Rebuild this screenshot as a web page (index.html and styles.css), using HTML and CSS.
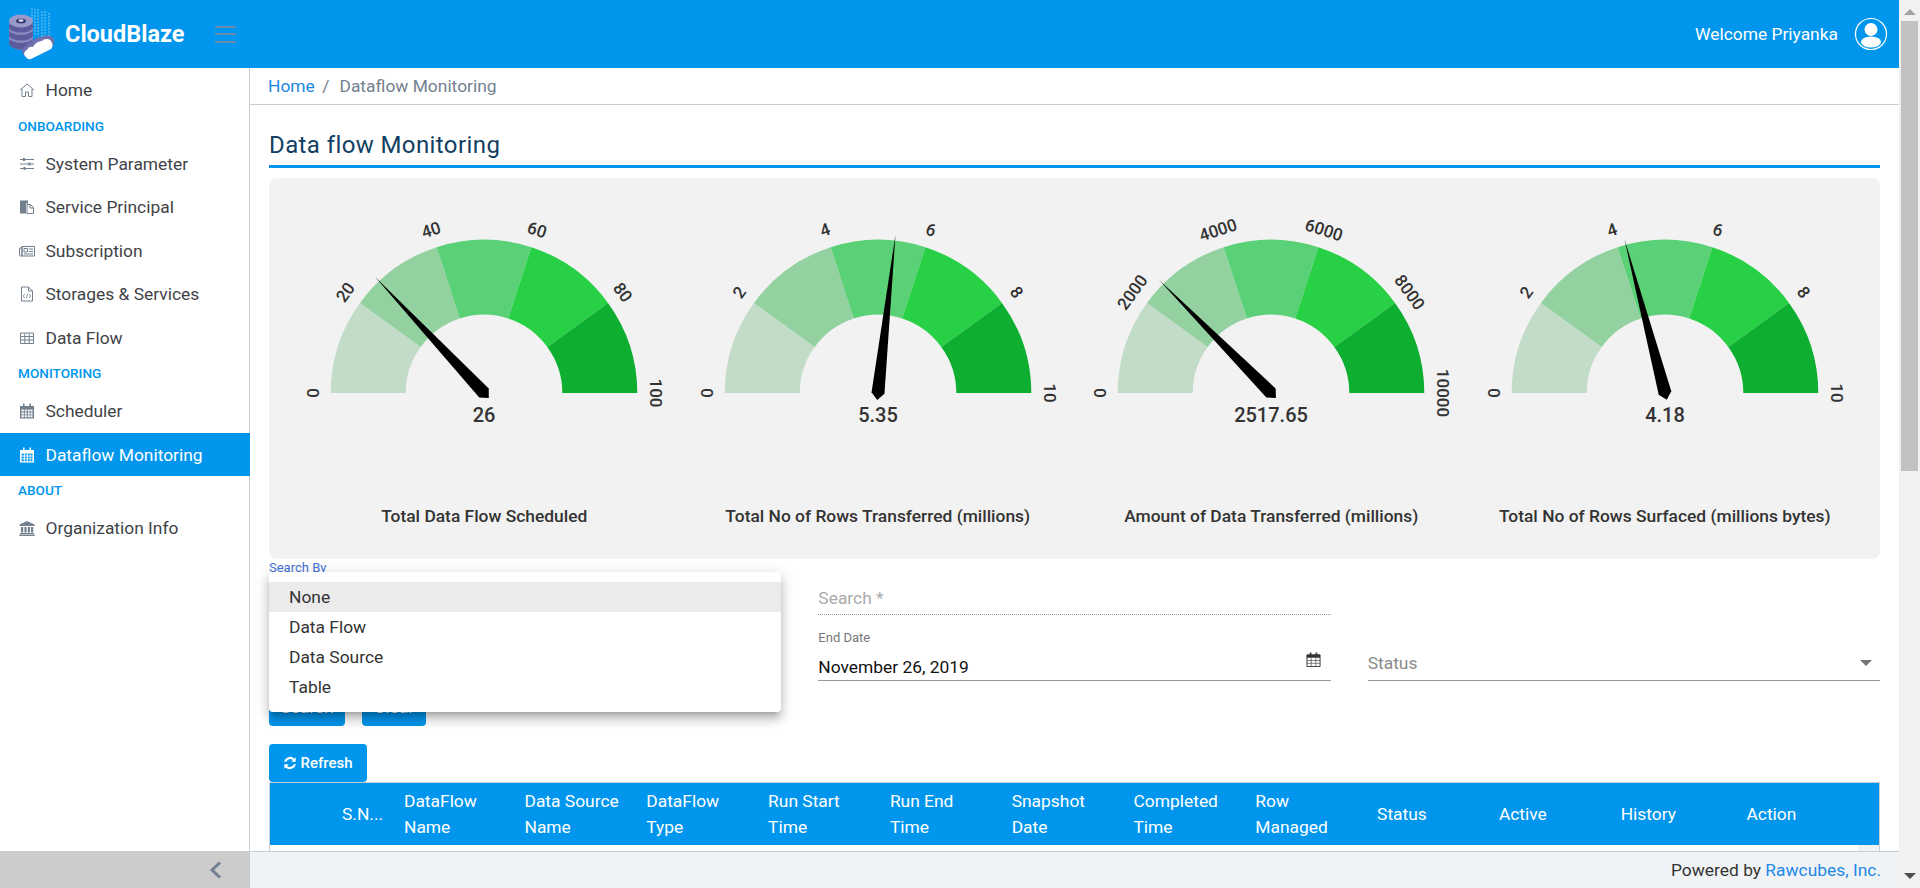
FILE: index.html
```html
<!DOCTYPE html>
<html lang="en">
<head>
<meta charset="utf-8">
<title>CloudBlaze - Dataflow Monitoring</title>
<link rel="stylesheet" href="styles.css">
</head>
<body>
<div class="page">
  <div class="app">
    <header class="topbar">
      <svg class="logo" width="56" height="60" viewBox="0 0 56 60">
        <g stroke="#7cc6f5" stroke-width="1" stroke-dasharray="2 1" fill="none">
          <path d="M26 4v26M29 5v26M32 5v26M36 7v26M39 7v26M43 9v24"/>
        </g>
        <path d="M3 38c0 4 5 8 12 8s12-4 12-8V18H3z" fill="#6f6fae"/>
        <ellipse cx="15" cy="39" rx="12" ry="6" fill="#5c5c9c"/>
        <ellipse cx="15" cy="33" rx="12" ry="6" fill="#8a8ac2"/>
        <ellipse cx="15" cy="31" rx="12" ry="5.5" fill="#5c5c9c"/>
        <ellipse cx="15" cy="25" rx="12" ry="6" fill="#8a8ac2"/>
        <ellipse cx="15" cy="23" rx="12" ry="5.5" fill="#5c5c9c"/>
        <ellipse cx="15" cy="17" rx="12" ry="6.5" fill="#9a9acb"/>
        <ellipse cx="15" cy="17" rx="5" ry="2.5" fill="#3c3c74"/>
        <ellipse cx="15" cy="16.500" rx="2.500" ry="1.200" fill="#d5e6f7"/>
        <path d="M17 50c-2-3 0-7 3-8 1-3 4-4 6-4 2-3 7-6 10-5 3-2 9-2 11 1 2 3 1 7-1 9L25 53c-3 1-6 0-8-3z" fill="#6f6fae"/>
        <path d="M20 53c-3-2-2-6 1-7 1-3 4-4 6-3 2-4 6-6 9-6 1-2 7-3 9 0 2 3 2 6 0 8L25 55c-2 .5-4 0-5-2z" fill="#fff"/>
      </svg>
      <span class="brand">CloudBlaze</span>
      <span class="burger"><i></i><i></i><i></i></span>
      <div class="user">
        <span>Welcome Priyanka</span>
        <svg width="34" height="34" viewBox="0 0 34 34">
          <defs><clipPath id="avatar"><circle cx="17" cy="17" r="15.500"/></clipPath></defs>
          <circle cx="17" cy="17" r="15.500" fill="none" stroke="#fff" stroke-width="1.200"/>
          <g clip-path="url(#avatar)" fill="#fff">
            <circle cx="17" cy="12.500" r="6.500"/>
            <ellipse cx="17" cy="25" rx="10" ry="5.500"/>
          </g>
        </svg>
      </div>
    </header>

    <div class="body">
      <aside class="sidebar">
        <nav class="nav">
          <a class="item">
            <svg class="ico" viewBox="0 0 16 16"><path d="M1 8l7-6 7 6M3 7v7.500h3.500V10h3v4.500H13V7" fill="none" stroke="currentColor"/></svg>Home</a>
          <div class="group">ONBOARDING</div>
          <a class="item">
            <svg class="ico" viewBox="0 0 16 16"><path d="M1 3.500h14M1 8h14M1 12.500h14" stroke="currentColor" fill="none"/><path d="M4 2h2v3H4zM9.500 6.500h2v3h-2zM4.500 11h2v3h-2z" fill="currentColor"/></svg>System Parameter</a>
          <a class="item">
            <svg class="ico" viewBox="0 0 16 16"><path d="M1 1.500h8v3H7v10H1z" fill="currentColor"/><path d="M8 5.500h3.500l3 3v6H8z" fill="#fff" stroke="currentColor"/><path d="M11 5.500v3.500h3.500" fill="none" stroke="currentColor"/></svg>Service Principal</a>
          <a class="item">
            <svg class="ico" viewBox="0 0 16 16"><path d="M3 3.500h12.500v9.500H1.500A1 1 0 0 1 .5 12V5H3z" fill="none" stroke="currentColor"/><path d="M3 3.500V13" stroke="currentColor" fill="none" stroke-width="1.500"/><path d="M5 5.500h3.500v3.500H5zM10 6h4M10 8.500h4M5 11h9" fill="none" stroke="currentColor"/></svg>Subscription</a>
          <a class="item">
            <svg class="ico" viewBox="0 0 16 16"><path d="M2.500 1h7l4 4v10h-11z" fill="none" stroke="currentColor"/><path d="M9.500 1v4h4" fill="none" stroke="currentColor"/><path d="M6 8l-2 2 2 2M10 8l2 2-2 2M8.700 7.500l-1.400 5" fill="none" stroke="currentColor" stroke-width=".8"/></svg>Storages &amp; Services</a>
          <a class="item">
            <svg class="ico" viewBox="0 0 16 16"><path d="M1.500 3h13v10.500h-13zM1.500 6.500h13M1.500 10h13M5.800 3.500v10M10.200 3.500v10" fill="none" stroke="currentColor"/></svg>Data Flow</a>
          <div class="group">MONITORING</div>
          <a class="item">
            <svg class="ico" viewBox="0 0 16 16"><use href="#calendar"/></svg>Scheduler</a>
          <a class="item active">
            <svg class="ico" viewBox="0 0 16 16"><use href="#calendar"/></svg>Dataflow Monitoring</a>
          <div class="group">ABOUT</div>
          <a class="item">
            <svg class="ico" viewBox="0 0 16 16"><path d="M8 1l7.500 3.500V6H.5V4.500z" fill="currentColor"/><path d="M2 7h2.200v5.500H2zM5.400 7h2.200v5.500H5.400zM8.800 7H11v5.500H8.800zM12 7h2.200v5.500H12zM1 13h14v1H1zM.3 14.500h15.400V16H.3z" fill="currentColor"/></svg>Organization Info</a>
        </nav>
        <div class="minimizer">
          <svg width="14" height="20" viewBox="0 0 14 20"><path d="M11 2.500L3 10l8 7.500" fill="none" stroke="#73818f" stroke-width="3"/></svg>
        </div>
      </aside>

      <div class="column">
        <main class="main">
          <div class="crumbs"><a>Home</a><span class="sep">/</span><span>Dataflow Monitoring</span></div>
          <div class="content">
            <h1 class="title">Data flow Monitoring</h1>

            <section class="panel">
              <figure class="gauge">
                <svg width="380" height="260" viewBox="-190 -215 380 260">
                  <defs>
                    <g id="arcs">
                      <path d="M-153.300 0A153.300 153.300 0 0 1-124-90.100L-63.300-46A78.300 78.300 0 0 0-78.300 0z" fill="#c2dcc7"/>
                      <path d="M-124-90.100A153.300 153.300 0 0 1-47.400-145.800L-24.200-74.500A78.300 78.300 0 0 0-63.300-46z" fill="#93d2a0"/>
                      <path d="M-47.400-145.800A153.300 153.300 0 0 1 47.400-145.800L24.200-74.500A78.300 78.300 0 0 0-24.200-74.500z" fill="#5bd177"/>
                      <path d="M47.400-145.800A153.300 153.300 0 0 1 124-90.100L63.300-46A78.300 78.300 0 0 0 24.200-74.500z" fill="#27d045"/>
                      <path d="M124-90.100A153.300 153.300 0 0 1 153.300 0H78.300A78.300 78.300 0 0 0 63.300-46z" fill="#0eae30"/>
                    </g>
                    <polygon id="needle" points="0,-159 6.500,0 0,7 -6.500,0"/>
                  </defs>
                  <use href="#arcs"/>
                  <g class="tick">
                    <text transform="rotate(-90) translate(0,-165.500)">0</text>
                    <text transform="rotate(-54) translate(0,-165.500)">20</text>
                    <text transform="rotate(-18) translate(0,-165.500)">40</text>
                    <text transform="rotate(18) translate(0,-165.500)">60</text>
                    <text transform="rotate(54) translate(0,-165.500)">80</text>
                    <text transform="rotate(90) translate(0,-165.500)">100</text>
                  </g>
                  <use href="#needle" transform="rotate(-43.200)"/>
                  <text class="value" y="29">26</text>
                </svg>
                <figcaption>Total Data Flow Scheduled</figcaption>
              </figure>

              <figure class="gauge">
                <svg width="380" height="260" viewBox="-190 -215 380 260">
                  <use href="#arcs"/>
                  <g class="tick">
                    <text transform="rotate(-90) translate(0,-165.500)">0</text>
                    <text transform="rotate(-54) translate(0,-165.500)">2</text>
                    <text transform="rotate(-18) translate(0,-165.500)">4</text>
                    <text transform="rotate(18) translate(0,-165.500)">6</text>
                    <text transform="rotate(54) translate(0,-165.500)">8</text>
                    <text transform="rotate(90) translate(0,-165.500)">10</text>
                  </g>
                  <use href="#needle" transform="rotate(6.300)"/>
                  <text class="value" y="29">5.35</text>
                </svg>
                <figcaption>Total No of Rows Transferred (millions)</figcaption>
              </figure>

              <figure class="gauge">
                <svg width="380" height="260" viewBox="-190 -215 380 260">
                  <use href="#arcs"/>
                  <g class="tick">
                    <text transform="rotate(-90) translate(0,-165.500)">0</text>
                    <text transform="rotate(-54) translate(0,-165.500)">2000</text>
                    <text transform="rotate(-18) translate(0,-165.500)">4000</text>
                    <text transform="rotate(18) translate(0,-165.500)">6000</text>
                    <text transform="rotate(54) translate(0,-165.500)">8000</text>
                    <text transform="rotate(90) translate(0,-165.500)">10000</text>
                  </g>
                  <use href="#needle" transform="rotate(-44.700)"/>
                  <text class="value" y="29">2517.65</text>
                </svg>
                <figcaption>Amount of Data Transferred (millions)</figcaption>
              </figure>

              <figure class="gauge">
                <svg width="380" height="260" viewBox="-190 -215 380 260">
                  <use href="#arcs"/>
                  <g class="tick">
                    <text transform="rotate(-90) translate(0,-165.500)">0</text>
                    <text transform="rotate(-54) translate(0,-165.500)">2</text>
                    <text transform="rotate(-18) translate(0,-165.500)">4</text>
                    <text transform="rotate(18) translate(0,-165.500)">6</text>
                    <text transform="rotate(54) translate(0,-165.500)">8</text>
                    <text transform="rotate(90) translate(0,-165.500)">10</text>
                  </g>
                  <use href="#needle" transform="rotate(-14.760)"/>
                  <text class="value" y="29">4.18</text>
                </svg>
                <figcaption>Total No of Rows Surfaced (millions bytes)</figcaption>
              </figure>
            </section>

            <section class="filters">
              <div class="field first">
                <label class="float focus">Search By</label>
                <ul class="menu">
                  <li class="selected">None</li>
                  <li>Data Flow</li>
                  <li>Data Source</li>
                  <li>Table</li>
                </ul>
              </div>
              <div class="field dotted"><span class="placeholder">Search *</span></div>
              <div class="field none"></div>
              <div class="field line"></div>
              <div class="field line">
                <label class="float">End Date</label>
                <div class="valuerow">
                  <span class="val">November 26, 2019</span>
                  <svg class="cal" width="15" height="15" viewBox="0 0 16 16"><use href="#calendar-dark"/></svg>
                </div>
              </div>
              <div class="field line status">
                <div class="valuerow">
                  <span class="placeholder dim">Status</span>
                  <svg width="12" height="6" viewBox="0 0 12 6"><path d="M0 0h12L6 6z" fill="#757575"/></svg>
                </div>
              </div>
            </section>

            <div class="actions">
              <button class="btn wide">Search</button>
              <button class="btn">Clear</button>
            </div>

            <button class="btn refresh">
              <svg width="14" height="14" viewBox="0 0 16 16"><path d="M14.500 1.500v5h-5l1.800-1.800A4.700 4.700 0 0 0 3.700 6.500H1.300a7 7 0 0 1 11.700-3.500zM1.500 14.500v-5h5l-1.800 1.800a4.700 4.700 0 0 0 7.600-1.800h2.400A7 7 0 0 1 3 13z" fill="#fff"/></svg>Refresh</button>

            <div class="table">
              <div class="thead">
                <span class="blank"></span>
                <span>S.N...</span>
                <span>DataFlow<br>Name</span>
                <span>Data Source<br>Name</span>
                <span>DataFlow<br>Type</span>
                <span>Run Start<br>Time</span>
                <span>Run End<br>Time</span>
                <span>Snapshot<br>Date</span>
                <span>Completed<br>Time</span>
                <span>Row<br>Managed</span>
                <span>Status</span>
                <span>Active</span>
                <span>History</span>
                <span class="last">Action</span>
              </div>
              <div class="tbody"><i class="corner"></i></div>
            </div>
          </div>
        </main>
        <footer class="footer">Powered by&nbsp;<a>Rawcubes, Inc.</a></footer>
      </div>
    </div>
  </div>

  <div class="scroll">
    <svg width="12" height="6" viewBox="0 0 12 6"><path d="M0 6h12L6 0z" fill="#a3a3a3"/></svg>
    <div class="thumb"></div>
    <svg class="down" width="12" height="6" viewBox="0 0 12 6"><path d="M0 0h12L6 6z" fill="#505050"/></svg>
  </div>
</div>

<svg class="sprites" width="0" height="0">
  <defs>
    <g id="calendar">
      <path d="M1 3h14v12.500H1z" fill="currentColor"/>
      <path d="M4 .5h1.500v3.500H4zM10.500.5H12v3.500h-1.500z" fill="currentColor"/>
      <path d="M2.500 6.500h2.300v2H2.500zM5.800 6.500h2v2h-2zM8.800 6.500h2v2h-2zM11.500 6.500h2v2h-2zM2.500 9.500h2.300v2H2.500zM5.800 9.500h2v2h-2zM8.800 9.500h2v2h-2zM11.500 9.500h2v2h-2zM2.500 12.300h2.300v2H2.500zM5.800 12.300h2v2h-2zM8.800 12.300h2v2h-2zM11.500 12.300h2v2h-2z" fill="var(--cell,#fff)"/>
    </g>
    <g id="calendar-dark">
      <path d="M1 3h14v12.500H1z" fill="#fff" stroke="#333"/>
      <path d="M1 3h14v3H1zM4 .5h1.800v3.500H4zM10.200.5H12v3.500h-1.800z" fill="#333"/>
      <path d="M1 9h14M1 12h14M5.500 6v9M10.500 6v9" stroke="#555" stroke-width=".8"/>
    </g>
  </defs>
</svg>
</body>
</html>
```

FILE: styles.css
```css
* { box-sizing: border-box; }
html, body { margin: 0; height: 100%; }
body {
  font-family: "Roboto", "Liberation Sans", sans-serif;
  font-size: 17.4px;
  color: #333;
  background: #fff;
  overflow: hidden;
}
a { text-decoration: none; }
.sprites { position: absolute; }

.page { display: flex; height: 888px; }
.app { flex: 1; min-width: 0; display: flex; flex-direction: column; }

/* header */
.topbar {
  height: 68px;
  flex: none;
  background: #0096ed;
  color: #fff;
  display: flex;
  align-items: center;
  padding: 0 11px 0 6px;
}
.logo { flex: none; }
.brand { margin-left: 3px; font-size: 23.5px; font-weight: 700; width: 119px; white-space: nowrap; }
.burger { margin-left: 31px; width: 21px; display: flex; flex-direction: column; gap: 5.5px; }
.burger i { display: block; height: 2px; background: #6f8aa8; }
.user { margin-left: auto; display: flex; align-items: center; gap: 16px; }

/* sidebar */
.body { flex: 1; min-height: 0; display: flex; }
.sidebar { width: 250px; flex: none; display: flex; flex-direction: column; }
.nav {
  flex: 1;
  border-right: 1px solid #c8ced3;
  padding-top: .4px;
}
.item {
  display: flex;
  align-items: center;
  height: 43.5px;
  padding-left: 19px;
  color: #3f4347;
  margin-right: -1px;
}
.item .ico { width: 16px; height: 16px; margin-right: 10.5px; color: #73818f; --cell: #fff; flex: none; }
.item.active { background: #0096ed; color: #fff; }
.item.active .ico { color: #fff; --cell: #0096ed; }
.group {
  height: 30px;
  line-height: 29px;
  padding-left: 18px;
  font-size: 13.6px;
  font-weight: 500;
  color: #0096ed;
}
.minimizer {
  height: 37px;
  background: #ccc;
  display: flex;
  align-items: center;
  justify-content: flex-end;
  padding-right: 27px;
}

/* main */
.column { flex: 1; min-width: 0; display: flex; flex-direction: column; }
.main { flex: 1; min-height: 0; overflow: hidden; }
.crumbs {
  height: 37px;
  border-bottom: 1px solid #c8ced3;
  padding-left: 18px;
  line-height: 36px;
  color: #73818f;
}
.crumbs a { color: #1e88e5; }
.crumbs .sep { margin: 0 10px 0 7.5px; }
.content { padding: 0 19px; }
.title {
  margin: 0 0 10px;
  padding: 24px 0 4px;
  font-size: 24px;
  line-height: 32px;
  font-weight: 400;
  letter-spacing: .4px;
  color: #123f63;
  border-bottom: 3px solid #0096ed;
}

/* gauges */
.panel {
  height: 381px;
  background: #f2f2f2;
  border-radius: 8px;
  padding: 0 18.5px;
  display: grid;
  grid-template-columns: repeat(4, 1fr);
}
.gauge { margin: 0; display: flex; flex-direction: column; align-items: center; }
.gauge svg { display: block; flex: none; overflow: visible; }
.gauge figcaption { margin-top: 68px; font-weight: 500; line-height: 20px; color: #333; white-space: nowrap; }
.tick text { font-size: 17px; font-weight: 500; fill: #333; text-anchor: middle; }
.value { font-size: 20px; font-weight: 500; fill: #333; text-anchor: middle; }

/* filters */
.filters {
  display: grid;
  grid-template-columns: repeat(3, 1fr);
  grid-template-rows: 56px 66px;
  column-gap: 37px;
}
.field { display: flex; flex-direction: column; justify-content: flex-end; min-width: 0; position: relative; }
.field.first { justify-content: flex-start; padding-top: 1px; }
.float { font-size: 13px; line-height: 16px; color: #777; }
.float.focus { color: #3f6fd8; }
.line { border-bottom: 1px solid #999; padding-bottom: 3px; }
.dotted { border-bottom: 1px dotted #999; padding-bottom: 6px; height: 56px; }
.none { border: 0; }
.placeholder { line-height: 20px; color: #aaa; }
.placeholder.dim { color: #8a8a8a; }
.valuerow { display: flex; justify-content: space-between; align-items: center; height: 20px; margin-top: 11px; }
.val { color: #111; }
.cal { margin: 0 10px 16px 0; }
.status { padding-bottom: 7px; }
.status .valuerow svg { margin-right: 8px; }

.menu {
  position: absolute;
  z-index: 5;
  top: 13px;
  left: 0;
  right: 0;
  height: 140px;
  margin: 0;
  padding: 10px 0;
  list-style: none;
  background: #fff;
  border-radius: 4px;
  box-shadow: 0 5px 5px -3px rgba(0,0,0,.2), 0 8px 10px 1px rgba(0,0,0,.14), 0 3px 14px 2px rgba(0,0,0,.12);
}
.menu li { height: 30px; line-height: 30px; padding-left: 20px; color: #333; }
.menu li.selected { background: #ebebeb; }

/* buttons */
.actions { display: flex; gap: 17px; margin-top: 7px; }
.btn {
  height: 38px;
  width: 64px;
  padding: 0;
  border: 0;
  border-radius: 4px;
  background: #0096ed;
  color: #fff;
  font: 400 17.4px "Roboto", sans-serif;
}
.btn.wide { width: 76px; }
.refresh {
  margin-top: 18px;
  width: 98px;
  display: flex;
  align-items: center;
  justify-content: center;
  gap: 3px;
  font-size: 15px;
  font-weight: 500;
}

/* table */
.table { border: 1px solid #c8ced3; border-bottom: 0; }
.thead {
  height: 62px;
  background: #0096ed;
  color: #fff;
  display: grid;
  grid-template-columns: 72px 62px 120.5px repeat(10, 121.8px) 1fr;
  align-items: center;
  line-height: 26px;
}
.thead .last { padding-left: 4px; }
.tbody { height: 40px; display: flex; justify-content: flex-end; }
.corner { width: 21px; height: 100%; background: #f1f1f1; }

/* footer */
.footer {
  height: 37px;
  flex: none;
  background: #f0f3f5;
  border-top: 1px solid #c8ced3;
  display: flex;
  align-items: center;
  justify-content: flex-end;
  padding-right: 18px;
  color: #333;
}
.footer a { color: #1e88e5; }

/* page scrollbar */
.scroll {
  width: 21px;
  flex: none;
  background: #f1f1f1;
  display: flex;
  flex-direction: column;
  align-items: center;
  padding-top: 9px;
}
.thumb { width: 17px; height: 450px; margin-top: 6px; background: #c1c1c1; }
.down { margin-top: auto; margin-bottom: 9px; }
```
